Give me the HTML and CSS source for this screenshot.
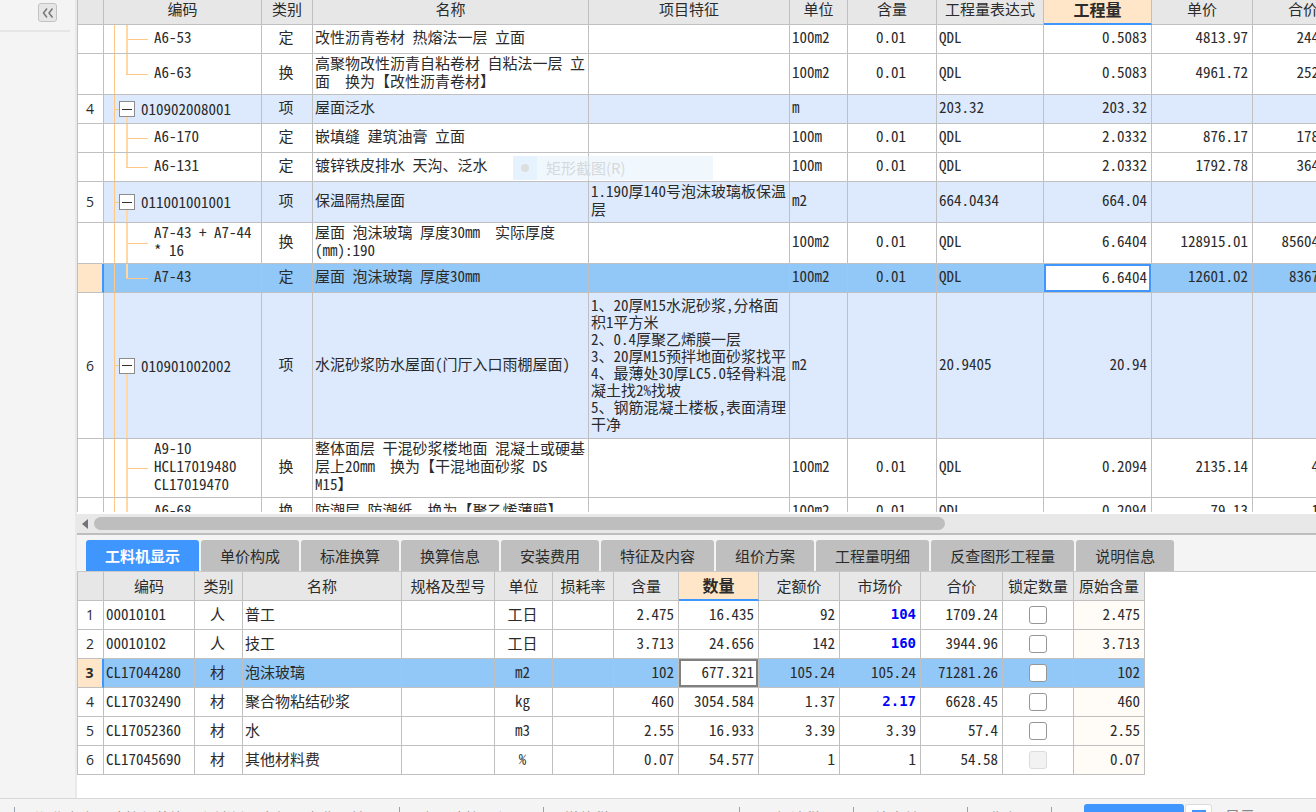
FILE: index.html
```html
<!DOCTYPE html>
<html lang="zh-CN">
<head>
<meta charset="utf-8">
<title>工程量清单计价</title>
<link rel="stylesheet" href="styles.css">
</head>
<body>
<div class="app">
  <div class="workspace">
    <aside class="sidebar">
      <div class="sidebar-head">
        <button class="collapse" type="button" aria-label="收起">
          <svg width="12" height="10" viewBox="0 0 12 10"><path d="M5 .5 1.5 5 5 9.500M10.500 .5 7 5l3.500 4.500" fill="none" stroke="#777" stroke-width="1.500"/></svg>
        </button>
      </div>
    </aside>
    <main class="content">
      <section class="bill">
        <table class="grid bill-grid">
          <colgroup>
            <col class="w-no"><col class="w-bcode"><col class="w-bkind"><col class="w-bname"><col class="w-bfeat"><col class="w-bunit"><col class="w-bcont"><col class="w-bexpr"><col class="w-bqty"><col class="w-bprice"><col class="w-btotal">
          </colgroup>
          <thead>
            <tr><th></th><th>编码</th><th>类别</th><th>名称</th><th>项目特征</th><th>单位</th><th>含量</th><th>工程量表达式</th><th class="current">工程量</th><th>单价</th><th>合价</th></tr>
          </thead>
          <tbody>
            <tr class="one"><td class="no"></td><td class="leaf">A6-53</td><td class="c">定</td><td>改性沥青卷材 热熔法一层 立面</td><td></td><td>100m2</td><td class="c">0.01</td><td>QDL</td><td class="r">0.5083</td><td class="r">4813.97</td><td class="r">2446.94</td></tr>
            <tr class="two"><td class="no"></td><td class="leaf last">A6-63</td><td class="c">换</td><td>高聚物改性沥青自粘卷材 自粘法一层 立<br>面  换为【改性沥青卷材】</td><td></td><td>100m2</td><td class="c">0.01</td><td>QDL</td><td class="r">0.5083</td><td class="r">4961.72</td><td class="r">2522.04</td></tr>
            <tr class="one item"><td class="no">4</td><td class="node"><div class="node-in"><button class="fold" type="button" aria-label="折叠"></button>010902008001</div></td><td class="c">项</td><td>屋面泛水</td><td></td><td>m</td><td></td><td>203.32</td><td class="r">203.32</td><td></td><td></td></tr>
            <tr class="one"><td class="no"></td><td class="leaf">A6-170</td><td class="c">定</td><td>嵌填缝 建筑油膏 立面</td><td></td><td>100m</td><td class="c">0.01</td><td>QDL</td><td class="r">2.0332</td><td class="r">876.17</td><td class="r">1781.43</td></tr>
            <tr class="one"><td class="no"></td><td class="leaf last">A6-131</td><td class="c">定</td><td>镀锌铁皮排水 天沟、泛水</td><td></td><td>100m</td><td class="c">0.01</td><td>QDL</td><td class="r">2.0332</td><td class="r">1792.78</td><td class="r">3645.08</td></tr>
            <tr class="two item"><td class="no">5</td><td class="node"><div class="node-in"><button class="fold" type="button" aria-label="折叠"></button>011001001001</div></td><td class="c">项</td><td>保温隔热屋面</td><td>1.190厚140号泡沫玻璃板保温<br>层</td><td>m2</td><td></td><td>664.0434</td><td class="r">664.04</td><td></td><td></td></tr>
            <tr class="two"><td class="no"></td><td class="leaf">A7-43 + A7-44<br>* 16</td><td class="c">换</td><td>屋面 泡沫玻璃 厚度30mm  实际厚度<br>(mm):190</td><td></td><td>100m2</td><td class="c">0.01</td><td>QDL</td><td class="r">6.6404</td><td class="r">128915.01</td><td class="r">856047.23</td></tr>
            <tr class="one chosen"><td class="no"></td><td class="leaf last">A7-43</td><td class="c">定</td><td>屋面 泡沫玻璃 厚度30mm</td><td></td><td>100m2</td><td class="c">0.01</td><td>QDL</td><td class="edit"><input class="cell-input" type="text" value="6.6404" aria-label="工程量"></td><td class="r">12601.02</td><td class="r">83675.81</td></tr>
            <tr class="eight item"><td class="no">6</td><td class="node"><div class="node-in"><button class="fold" type="button" aria-label="折叠"></button>010901002002</div></td><td class="c">项</td><td>水泥砂浆防水屋面(门厅入口雨棚屋面)</td><td>1、20厚M15水泥砂浆,分格面<br>积1平方米<br>2、0.4厚聚乙烯膜一层<br>3、20厚M15预拌地面砂浆找平<br>4、最薄处30厚LC5.0轻骨料混<br>凝土找2%找坡<br>5、钢筋混凝土楼板,表面清理<br>干净</td><td>m2</td><td></td><td>20.9405</td><td class="r">20.94</td><td></td><td></td></tr>
            <tr class="three"><td class="no"></td><td class="leaf">A9-10<br>HCL17019480<br>CL17019470</td><td class="c">换</td><td>整体面层 干混砂浆楼地面 混凝土或硬基<br>层上20mm  换为【干混地面砂浆 DS<br>M15】</td><td></td><td>100m2</td><td class="c">0.01</td><td>QDL</td><td class="r">0.2094</td><td class="r">2135.14</td><td class="r">447.1</td></tr>
            <tr class="one"><td class="no"></td><td class="leaf last">A6-68</td><td class="c">换</td><td>防潮层 防潮纸  换为【聚乙烯薄膜】</td><td></td><td>100m2</td><td class="c">0.01</td><td>QDL</td><td class="r">0.2094</td><td class="r">79.13</td><td class="r">16.57</td></tr>
          </tbody>
        </table>
        <div class="menu-ghost"><span class="menu-mark"></span><span class="menu-text">矩形截图(R)</span></div>
      </section>
      <div class="scroller">
        <svg class="arrow" width="6" height="10" viewBox="0 0 6 10"><path d="M6 0v10L0 5z" fill="#73737b"/></svg>
        <div class="thumb"></div>
      </div>
      <nav class="tabs">
        <button class="tab on" type="button">工料机显示</button>
        <button class="tab" type="button">单价构成</button>
        <button class="tab" type="button">标准换算</button>
        <button class="tab" type="button">换算信息</button>
        <button class="tab" type="button">安装费用</button>
        <button class="tab" type="button">特征及内容</button>
        <button class="tab" type="button">组价方案</button>
        <button class="tab" type="button">工程量明细</button>
        <button class="tab" type="button">反查图形工程量</button>
        <button class="tab" type="button">说明信息</button>
      </nav>
      <section class="detail">
        <table class="grid detail-grid">
          <colgroup>
            <col class="w-no"><col class="w-dcode"><col class="w-dkind"><col class="w-dname"><col class="w-dspec"><col class="w-dunit"><col class="w-dloss"><col class="w-dcont"><col class="w-dqty"><col class="w-dfix"><col class="w-dmkt"><col class="w-dsum"><col class="w-dlock"><col class="w-dorig">
          </colgroup>
          <thead>
            <tr><th></th><th>编码</th><th>类别</th><th>名称</th><th>规格及型号</th><th>单位</th><th>损耗率</th><th>含量</th><th class="current">数量</th><th>定额价</th><th>市场价</th><th>合价</th><th>锁定数量</th><th>原始含量</th></tr>
          </thead>
          <tbody>
            <tr class="one"><td class="no">1</td><td>00010101</td><td class="c">人</td><td>普工</td><td></td><td class="c">工日</td><td></td><td class="r">2.475</td><td class="r">16.435</td><td class="r">92</td><td class="r changed">104</td><td class="r">1709.24</td><td class="tick"><input class="lock" type="checkbox" aria-label="锁定数量 1"></td><td class="r orig">2.475</td></tr>
            <tr class="one"><td class="no">2</td><td>00010102</td><td class="c">人</td><td>技工</td><td></td><td class="c">工日</td><td></td><td class="r">3.713</td><td class="r">24.656</td><td class="r">142</td><td class="r changed">160</td><td class="r">3944.96</td><td class="tick"><input class="lock" type="checkbox" aria-label="锁定数量 2"></td><td class="r orig">3.713</td></tr>
            <tr class="one chosen"><td class="no">3</td><td>CL17044280</td><td class="c">材</td><td>泡沫玻璃</td><td></td><td class="c">m2</td><td></td><td class="r">102</td><td class="edit"><input class="cell-input idle" type="text" value="677.321" aria-label="数量"></td><td class="r">105.24</td><td class="r">105.24</td><td class="r">71281.26</td><td class="tick"><input class="lock" type="checkbox" aria-label="锁定数量 3"></td><td class="r orig">102</td></tr>
            <tr class="one"><td class="no">4</td><td>CL17032490</td><td class="c">材</td><td>聚合物粘结砂浆</td><td></td><td class="c">kg</td><td></td><td class="r">460</td><td class="r">3054.584</td><td class="r">1.37</td><td class="r changed">2.17</td><td class="r">6628.45</td><td class="tick"><input class="lock" type="checkbox" aria-label="锁定数量 4"></td><td class="r orig">460</td></tr>
            <tr class="one"><td class="no">5</td><td>CL17052360</td><td class="c">材</td><td>水</td><td></td><td class="c">m3</td><td></td><td class="r">2.55</td><td class="r">16.933</td><td class="r">3.39</td><td class="r">3.39</td><td class="r">57.4</td><td class="tick"><input class="lock" type="checkbox" aria-label="锁定数量 5"></td><td class="r orig">2.55</td></tr>
            <tr class="one"><td class="no">6</td><td>CL17045690</td><td class="c">材</td><td>其他材料费</td><td></td><td class="c">%</td><td></td><td class="r">0.07</td><td class="r">54.577</td><td class="r">1</td><td class="r">1</td><td class="r">54.58</td><td class="tick"><input class="lock" type="checkbox" disabled aria-label="锁定数量 6"></td><td class="r orig">0.07</td></tr>
          </tbody>
        </table>
      </section>
    </main>
  </div>
  <footer class="status">
    <span class="seg s1">湖北省房屋建筑与装饰工程消耗量定额及全费用基价</span>
    <span class="seg s2">房屋建筑工程</span>
    <span class="seg s3">增值税</span>
    <span class="seg s4">一般计税</span>
    <span class="seg s5">综合单价</span>
    <span class="seg s6">费率</span>
    <span class="seg s7"><button class="primary" type="button" aria-label="操作"></button><button class="view" type="button" aria-label="视图"><i></i></button><span>显示</span></span>
  </footer>
</div>
</body>
</html>
```
FILE: styles.css
```css
* { box-sizing: border-box; }
body {
  margin: 0;
  overflow: hidden;
  color: #2b2b2b;
  background: #f4f4f4;
  font: 15px/18px "Noto Sans Mono CJK SC", "Liberation Mono", "Noto Sans CJK SC", monospace;
}
button, input { font: inherit; color: inherit; margin: 0; }
.app { display: flex; flex-direction: column; height: 100vh; }
.workspace { display: flex; flex: 1; min-height: 0; }

.sidebar { flex: none; width: 77px; padding-right: 5px; border-right: 2px solid #e9e9e9; }
.sidebar-head { display: flex; justify-content: flex-end; height: 32px; padding: 3px 13px 0 0; border-bottom: 2px solid #e6e6e6; }
.collapse { display: flex; align-items: center; justify-content: center; width: 19px; height: 19px; padding: 0; border: 1px solid #c2c2c2; border-radius: 3px; background: #e6e6e6; }

.content { display: flex; flex-direction: column; flex: 1; min-width: 0; background: #fff; }
.bill { position: relative; flex: 1; min-height: 0; overflow: hidden; }

.grid { table-layout: fixed; width: 0; border-collapse: separate; border-spacing: 0; border-left: 1px solid #c0c0c0; }
.grid th, .grid td { border-right: 1px solid #c0c0c0; border-bottom: 1px solid #c0c0c0; white-space: pre; text-align: left; overflow: hidden; }
.grid th { height: 29px; padding: 0 2px; background: #e7e7e7; font-weight: 400; text-align: center; }
.grid td { padding: 0 2px 2px; }
.bill-grid th { height: 25px; padding-bottom: 6px; }
.bill-grid td { padding-bottom: 4px; }
.grid .current { padding-bottom: 1px; background: #ffe6c8; border-bottom: 2px solid #4096ff; font-weight: 700; font-size: 16px; }
.bill-grid .current { padding-bottom: 5px; }
.grid .no { padding: 0 1px 0 0; text-align: center; font-family: "Open Sans", sans-serif; font-size: 14px; }
.grid .c { padding-right: 4px; text-align: center; }
.grid .r { padding-right: 4px; text-align: right; }
.one td { height: 29px; }
.two td { height: 41px; }
.three td { height: 59px; }
.eight td { height: 146px; line-height: 17px; }
.item td { background-color: #ddeafe; }
.chosen td { background-color: #92c8f7; }
.item .no { background-color: #fff; }
.chosen .no { background-color: #ffe6c8; border-right: 2px solid #4096ff; font-weight: 700; }

.w-no { width: 26px; }
.w-bcode { width: 158px; }
.w-bkind { width: 51px; }
.w-bname { width: 276px; }
.w-bfeat { width: 201px; }
.w-bunit { width: 58px; }
.w-bcont { width: 89px; }
.w-bexpr { width: 107px; }
.w-bqty { width: 108px; }
.w-bprice { width: 101px; }
.w-btotal { width: 101px; }

.grid .leaf, .grid .node {
  --trunk: linear-gradient(#ffc885, #ffc885);
  --twig: linear-gradient(#ffd8a6, #ffd8a6);
  background-repeat: no-repeat;
  background-image: var(--trunk), var(--twig), var(--trunk);
}
.grid .leaf { padding-left: 50px; background-position: 10px 0, 22px 0, 22px 50%; background-size: 1px 100%, 2px 100%, 22px 1px; }
.grid .leaf.last { background-size: 1px 100%, 2px 50%, 22px 1px; }
.grid .node { padding: 0 0 0 15px; background-position: 10px 0, 22px 100%, 10px 50%; background-size: 1px 100%, 2px 50%, 6px 1px; }
.node-in { display: flex; align-items: center; gap: 6px; }
.fold { width: 16px; height: 16px; padding: 0; border: 1px solid #8c8c8c; background: linear-gradient(#333, #333) center / 10px 1px no-repeat #fff; }

.grid .edit, .grid .tick { padding: 0; }
.cell-input { display: block; width: 100%; height: 28px; padding: 0 2px 3px; border: 2px solid #4096ff; border-radius: 0; background: #fff; text-align: right; outline: 0; }
.cell-input.idle { border-color: #808080; }

.menu-ghost { position: absolute; left: 436px; top: 156px; display: flex; align-items: center; width: 200px; height: 24px; background: rgba(228, 242, 254, .55); color: #d6d9dc; font-family: "Noto Sans CJK SC", sans-serif; }
.menu-mark { display: flex; align-items: center; justify-content: center; width: 24px; height: 24px; margin-right: 9px; background: rgba(215, 236, 254, .4); }
.menu-mark::before { content: ""; width: 8px; height: 8px; border-radius: 50%; background: #dedede; }

.scroller { display: flex; align-items: center; flex: none; height: 21px; margin-top: 2px; padding-left: 5px; gap: 6px; background: #e8e8e8; border-bottom: 2px solid #bebebe; }
.thumb { width: 69%; height: 13px; border-radius: 7px; background: #bebebe; }

.tabs { display: flex; flex: none; gap: 2px; height: 37px; padding: 5px 0 0 9px; background: #f4f4f4; border-bottom: 1px solid #c8c8c8; }
.tab { height: 31px; padding: 0 19px; border: 0; border-radius: 3px 3px 0 0; background: #bfbfbf; font-family: "Noto Sans CJK SC", sans-serif; white-space: nowrap; }
.tab.on { background: #4096ff; color: #fff; font-weight: 700; }

.detail { flex: none; height: 226px; overflow: hidden; }
.w-dcode { width: 91px; }
.w-dkind { width: 48px; }
.w-dname { width: 159px; }
.w-dspec { width: 93px; }
.w-dunit { width: 58px; }
.w-dloss { width: 61px; }
.w-dcont { width: 65px; }
.w-dqty { width: 80px; }
.w-dfix { width: 81px; }
.w-dmkt { width: 81px; }
.w-dsum { width: 82px; }
.w-dlock { width: 71px; }
.w-dorig { width: 71px; }
.grid .changed { color: #00f; font-family: "DejaVu Sans Mono", monospace; font-size: 14px; font-weight: 700; }
.orig { background: #fffcf7; }
.lock { appearance: none; display: block; width: 18px; height: 18px; margin: 0 auto; border: 1px solid #969696; border-radius: 3px; background: #fff; }
.lock:disabled { border-color: #dcdcdc; background: #f2f2f2; }

.status { display: flex; flex: none; height: 14px; overflow: hidden; border-top: 1px solid #d8d8d8; background: #f4f4f4; padding: 8px 0 0 14px; color: #888; font-family: "Noto Sans CJK SC", sans-serif; white-space: nowrap; }
.seg { flex: none; height: 24px; padding: 2px 0 0 20px; border-left: 1px solid #9aa3ad; }
.s1 { width: 385px; }
.s2 { width: 144px; }
.s3 { width: 196px; }
.s4 { width: 114px; }
.s5 { width: 114px; }
.s6 { width: 84px; }
.s7 { display: flex; gap: 1px; padding: 0 0 0 32px; }
.primary, .view { flex: none; height: 26px; margin-top: -3px; padding: 0; border: 0; border-radius: 3px; }
.primary { width: 100px; background: #4096ff; }
.view { display: flex; justify-content: center; width: 27px; margin-right: 12px; padding-top: 5px; border: 1px solid #dcdcdc; background: #fff; }
.view i { width: 14px; height: 14px; background: #4096ff; }
```
